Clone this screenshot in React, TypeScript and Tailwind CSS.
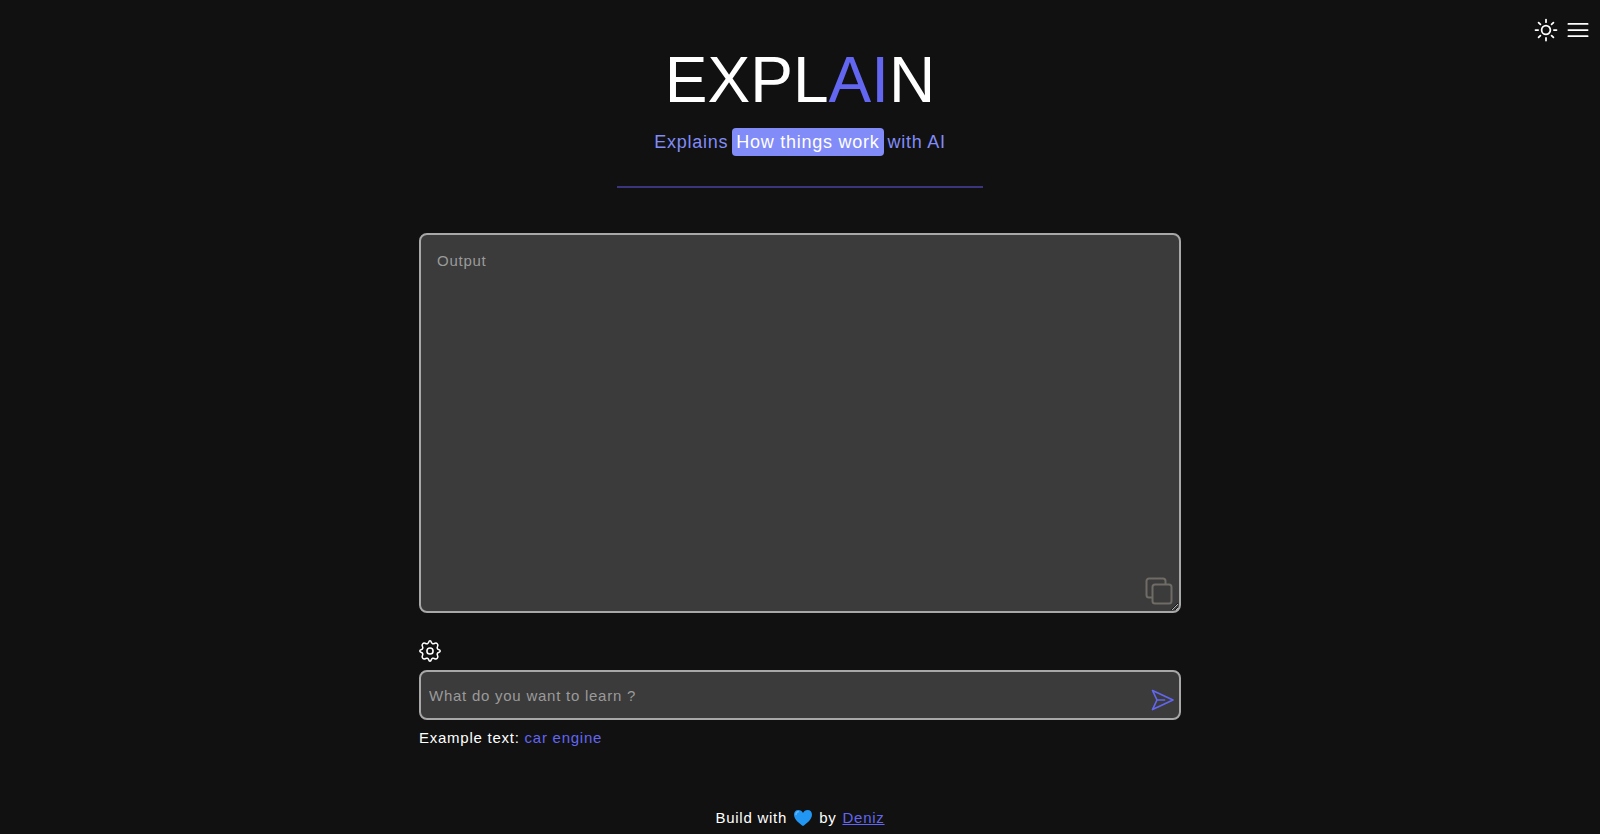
import React, { useState } from "react";
import { HiOutlineSun, HiOutlineBars3 } from "react-icons/hi2";

function CopyIcon() {
  return (
    <svg viewBox="0 0 28 28" className="size-7" fill="none" stroke="currentColor" strokeWidth="2" strokeLinejoin="round" aria-hidden="true">
      <rect x="7.500" y="7.500" width="19" height="19" rx="2.500" />
      <path d="M7.500 20.500H4A2.500 2.500 0 0 1 1.500 18V4A2.500 2.500 0 0 1 4 1.500H18A2.500 2.500 0 0 1 20.500 4V7.500" />
    </svg>
  );
}

function SendIcon() {
  return (
    <svg viewBox="0 0 24 24" className="size-6" fill="none" stroke="currentColor" strokeWidth="1.700" strokeLinejoin="round" strokeLinecap="round" aria-hidden="true">
      <path d="M1.500 2.500L22 12L1.500 21.500L6 12ZM6 12H13.500" />
    </svg>
  );
}

function GearIcon() {
  return (
    <svg viewBox="2 2 20 20" className="size-5.5" fill="none" stroke="currentColor" strokeWidth="1.400" strokeLinejoin="round" strokeLinecap="round" aria-hidden="true">
      <path d="M12 2.700C12.700 2.700 13 3.300 13.300 4.200C13.600 5.300 14.900 5.800 15.900 5.200C16.800 4.700 17.700 4.400 18.600 5.400C19.600 6.300 19.300 7.200 18.800 8.100C18.200 9.100 18.700 10.400 19.800 10.700C20.700 11 21.300 11.300 21.300 12C21.300 12.700 20.700 13 19.800 13.300C18.700 13.600 18.200 14.900 18.800 15.900C19.300 16.800 19.600 17.700 18.600 18.600C17.700 19.600 16.800 19.300 15.900 18.800C14.900 18.200 13.600 18.700 13.300 19.800C13 20.700 12.700 21.300 12 21.300C11.300 21.300 11 20.700 10.700 19.800C10.400 18.700 9.100 18.200 8.100 18.800C7.200 19.300 6.300 19.600 5.400 18.600C4.400 17.700 4.700 16.800 5.200 15.900C5.800 14.900 5.300 13.600 4.200 13.300C3.300 13 2.700 12.700 2.700 12C2.700 11.300 3.300 11 4.200 10.700C5.300 10.400 5.800 9.100 5.200 8.100C4.700 7.200 4.400 6.300 5.400 5.400C6.300 4.400 7.200 4.700 8.100 5.200C9.100 5.800 10.400 5.300 10.700 4.200C11 3.300 11.300 2.700 12 2.700Z" />
      <circle cx="12" cy="12" r="2.800" />
    </svg>
  );
}

function HeartIcon() {
  return (
    <svg viewBox="0 0 20 18" className="h-4.5 w-5" role="img" aria-label="love">
      <path d="M10 17C7 15 1 10.500 1 5.700C1 3 2.800 1 5.300 1C7.500 1 9.200 2.300 10 4C10.800 2.300 12.500 1 14.700 1C17.200 1 19 3 19 5.700C19 10.500 13 15 10 17Z" fill="#2196f3" />
      <path d="M3 5.500C3 4 4 2.800 5.300 2.800" fill="none" stroke="#64b5f6" strokeWidth="1.500" strokeLinecap="round" />
    </svg>
  );
}

export default function App() {
  const [prompt, setPrompt] = useState("");
  return (
    <div className="flex min-h-screen flex-col bg-[#111111] font-['Liberation_Sans',Arial,sans-serif] text-[15px] leading-6 tracking-wider text-white">
      <nav aria-label="Main" className="flex h-12 items-center justify-end gap-1 px-2 pt-3">
        <button type="button" aria-label="Toggle theme" className="flex size-7 items-center justify-center">
          <HiOutlineSun className="size-7" />
        </button>
        <button type="button" aria-label="Open menu" className="flex size-7 items-center justify-center">
          <HiOutlineBars3 className="size-7" />
        </button>
      </nav>

      <header className="flex flex-col items-center">
        <h1 className="text-[64px] leading-16 tracking-normal">
          EXPL<span className="text-[#6366f1]">AI</span>N
        </h1>
        <p className="mt-4 flex items-center gap-1 text-lg text-[#818cf8]">
          Explains
          <span className="rounded bg-[#818cf8] px-1 text-white">How things work</span>
          with AI
        </p>
        <hr className="mt-7.5 w-[366px] border-t-2 border-[#3b3580]" />
      </header>

      <main className="mx-auto mt-[45px] w-full max-w-[762px]">
        <div className="relative">
          <textarea
            aria-label="Output"
            placeholder="Output"
            readOnly
            className="block h-[380px] w-full resize rounded-lg border-2 border-[#a8a8a8] bg-[#3b3b3b] px-4 py-3.5 tracking-wider placeholder:text-[#9a9a9a]"
          />
          <button type="button" aria-label="Copy output" className="absolute right-2 bottom-2 text-[#6f6c66]">
            <CopyIcon />
          </button>
        </div>

        <button type="button" aria-label="Settings" className="mt-[27px] block">
          <GearIcon />
        </button>

        <form className="relative mt-2" onSubmit={(e) => e.preventDefault()}>
          <input
            aria-label="What do you want to learn ?"
            placeholder="What do you want to learn ?"
            value={prompt}
            onChange={(e) => setPrompt(e.target.value)}
            className="block h-[50px] w-full rounded-lg border-2 border-[#a8a8a8] bg-[#3b3b3b] pr-10 pl-2 tracking-wider placeholder:text-[#9a9a9a]"
          />
          <button type="submit" aria-label="Send" className="absolute right-1.5 bottom-2 text-[#6366f1]">
            <SendIcon />
          </button>
        </form>
        <p className="mt-1.5">
          Example text: <span className="text-[#6366f1]">car engine</span>
        </p>
      </main>

      <footer className="mt-auto flex items-center justify-center gap-1.5 pb-1">
        <span>Build with</span>
        <HeartIcon />
        <span>by</span>
        <a href="#deniz" className="text-[#6366f1] underline">Deniz</a>
      </footer>
    </div>
  );
}
